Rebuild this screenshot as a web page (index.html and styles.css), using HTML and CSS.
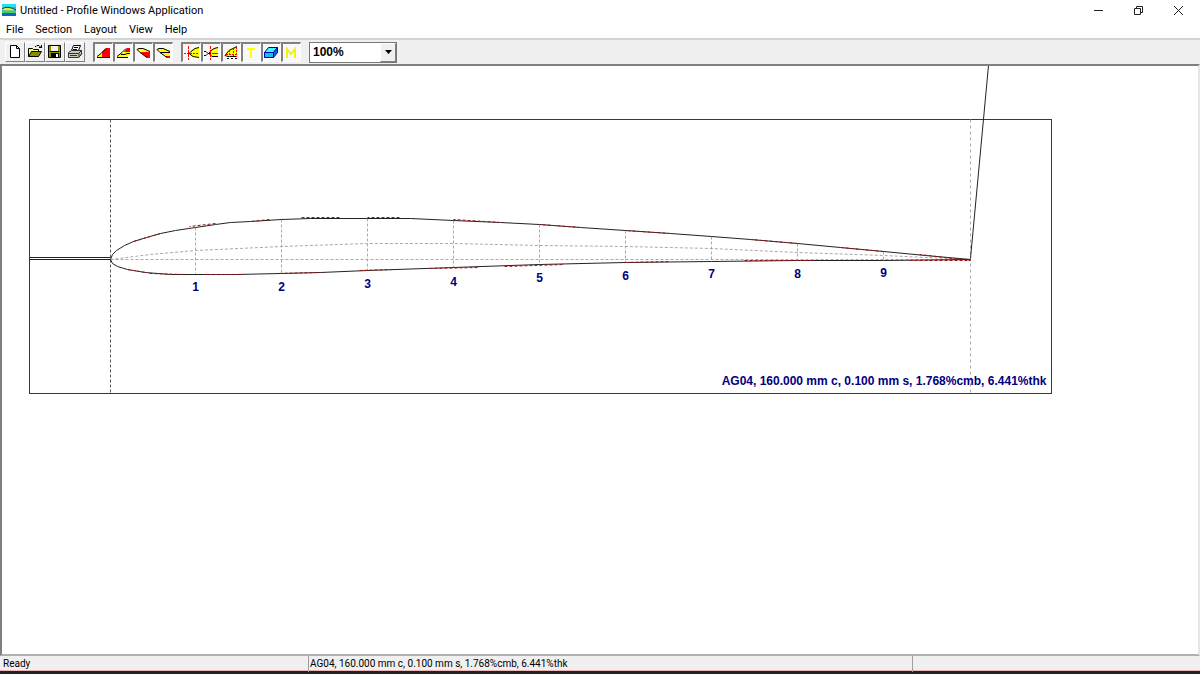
FILE: index.html
```html
<!DOCTYPE html>
<html lang="en">
<head>
  <meta charset="UTF-8">
  <title>Untitled - Profile Windows Application</title>
  <link rel="stylesheet" href="styles.css">
</head>
<body>
<header class="titlebar">
  <svg class="app-icon" width="16" height="14" viewBox="0 0 16 14" aria-hidden="true">
    <rect x="1" y="1" width="14" height="12" fill="#19b5ee"/>
    <path d="M1 1h14v3H9L1 5z" fill="#27e0f5"/>
    <path d="M1 6Q6 2 14 6L15 7Q8 8 1 7z" fill="#e8ea28"/>
    <path d="M1 6Q6 2 15 7" fill="none" stroke="#123c46"/>
    <path d="M1 8Q8 9 15 8v2H1z" fill="#43d65a"/>
    <path d="M1 10h14v3H1z" fill="#1264c0"/>
  </svg>
  <span class="title">Untitled - Profile Windows Application</span>
  <div class="window-buttons">
    <button type="button" aria-label="Minimize"><svg width="11" height="11" viewBox="0 0 11 11"><path d="M1 5.500h9"/></svg></button>
    <button type="button" aria-label="Restore"><svg width="11" height="11" viewBox="0 0 11 11"><path d="M1.500 3.500h6v6h-6zM3.500 3V1.500h6v6H8"/></svg></button>
    <button type="button" aria-label="Close"><svg width="11" height="11" viewBox="0 0 11 11"><path d="M1 1l9 9M10 1l-9 9"/></svg></button>
  </div>
</header>
<nav class="menu">
  <button type="button">File</button>
  <button type="button">Section</button>
  <button type="button">Layout</button>
  <button type="button">View</button>
  <button type="button">Help</button>
</nav>
<div class="toolbar">
  <div class="tools">
    <button type="button" aria-label="New"><svg width="16" height="16" viewBox="0 0 16 16">
      <path d="M3.500 1.500h6l3 3v9h-9z" fill="#fff" stroke="#000"/><path d="M9.500 1.500v3h3" fill="none" stroke="#000"/>
    </svg></button>
    <button type="button" aria-label="Open"><svg width="16" height="16" viewBox="0 0 16 16">
      <path d="M1.500 12.500v-8h4l1 1h5v2" fill="#ffff66" stroke="#000"/>
      <path d="M1.500 12.500l3-5h10l-3 5z" fill="#8c8c00" stroke="#000"/>
      <path d="M8 2.500h1l1-1h2l2 2M14.500 1v3M12 3.500h3" fill="none" stroke="#000"/>
    </svg></button>
    <button type="button" aria-label="Save"><svg width="16" height="16" viewBox="0 0 16 16">
      <path d="M1.500 1.500h12v12h-12z" fill="#8c8c00" stroke="#000"/>
      <path d="M4 2h7v5H4z" fill="#f0f0f0"/><path d="M4 9h8v5H4z"/><path d="M9 10h2v3H9z" fill="#fff"/><path d="M3 7h9v1H3z"/>
    </svg></button>
    <button type="button" aria-label="Print"><svg width="16" height="16" viewBox="0 0 16 16">
      <path d="M4.500 6.500l2-5h7l-2 5" fill="#fff" stroke="#000"/>
      <path d="M7 3.500h4M6 5.500h4" stroke="#000"/>
      <path d="M1.500 8.500l3-2h10v4l-3 3h-10z" fill="#c6c6c6" stroke="#333"/>
      <path d="M1 9.500h11v4M12 9l3-3M3 11.500h7M13 11.500l2-2" fill="none" stroke="#333"/>
      <path d="M8 10h2v1H8z" fill="#e6e600"/>
    </svg></button>
  </div>
  <div class="tools">
    <button type="button" class="checked" aria-pressed="true" aria-label="Upper root section"><svg width="16" height="16" viewBox="0 0 16 16">
      <path d="M2 12l5-4v4z" fill="#ff0"/><path d="M7 12V7l4-4h4v9z" fill="#f00"/>
      <path d="M2 12.500h13M2 11.500l4-3 5-5" fill="none" stroke="#000"/>
    </svg></button>
    <button type="button" class="checked" aria-pressed="true" aria-label="Upper tip section"><svg width="16" height="16" viewBox="0 0 16 16">
      <path d="M2 12l6-5h7v2l-3 3z" fill="#ff0"/><path d="M9 7l3-4h3v4z" fill="#f00"/>
      <path d="M2 12.500h11M2 11.500l5-4 4-4M6 9.500h4l2-1h3" fill="none" stroke="#000"/>
    </svg></button>
    <button type="button" class="checked" aria-pressed="true" aria-label="Lower root section"><svg width="16" height="16" viewBox="0 0 16 16">
      <path d="M2 5l2-2h4l7 3v2H5z" fill="#ff0"/><path d="M5 7h10v6h-3z" fill="#f00"/>
      <path d="M2 4.500l2-1h4l7 3M2 4.500l3 3 7 5" fill="none" stroke="#000"/>
    </svg></button>
    <button type="button" class="checked" aria-pressed="true" aria-label="Lower tip section"><svg width="16" height="16" viewBox="0 0 16 16">
      <path d="M2 5l2-2h4l7 3v5h-4z" fill="#ff0"/><path d="M10 11h5v2h-3z" fill="#f00"/>
      <path d="M2 4.500l2-1h4l7 3M2 4.500l3 3 7 5M5 7.500h10" fill="none" stroke="#000"/>
    </svg></button>
  </div>
  <div class="tools">
    <button type="button" class="checked" aria-pressed="true" aria-label="Axes"><svg width="16" height="16" viewBox="0 0 16 16">
      <path d="M6 8l4-4 6-2v10h-6z" fill="#ff0"/><path d="M16 2.500l-4 1-4 3-2 2 4 3 6 1" fill="none" stroke="#000"/>
      <path d="M5.500 1v14" stroke="#f00" stroke-dasharray="3 1"/><path d="M1 8.500h15" stroke="#f00" stroke-dasharray="2 1"/>
    </svg></button>
    <button type="button" class="checked" aria-pressed="true" aria-label="Leading edge"><svg width="16" height="16" viewBox="0 0 16 16">
      <path d="M6 8l3-4 6-2v10H8z" fill="#ff0"/><path d="M15 2.500l-4 1-4 3-1 2 3 3h6M1 6.500h2l2 2M1 10.500h2l2-2h3" fill="none" stroke="#000"/>
      <path d="M7.500 1v14" stroke="#f00" stroke-dasharray="3 1"/><path d="M9 8.500h6" stroke="#f00"/>
    </svg></button>
    <button type="button" class="checked" aria-pressed="true" aria-label="Stations"><svg width="16" height="16" viewBox="0 0 16 16">
      <path d="M2 9l5-5 7-3v10H4z" fill="#ff0"/><path d="M14 1.500l-4 2-4 2-4 5 3 1h9" fill="none" stroke="#000"/>
      <path d="M6.500 5v7M10.500 3v9M13.500 2v10M3 9.500h12" stroke="#f00" stroke-dasharray="2 1"/>
      <path d="M4 13.500h2M8 13.500h2M12 13.500h2" stroke="#000"/>
    </svg></button>
    <button type="button" class="checked" aria-pressed="true" aria-label="Text"><svg width="16" height="16" viewBox="0 0 16 16">
      <path d="M4 4h8M8 4v9" fill="none" stroke="#ff0" stroke-width="2"/>
    </svg></button>
    <button type="button" class="checked" aria-pressed="true" aria-label="Block"><svg width="16" height="16" viewBox="0 0 16 16">
      <path d="M1.500 7.500l4-5h9l-4 5z" fill="#3ff" stroke="#00a"/><path d="M1.500 7.500h9v5h-9z" fill="#19bdf5" stroke="#00a"/>
      <path d="M10.500 7.500l4-5v5l-4 5z" fill="#16c" stroke="#00a"/>
    </svg></button>
    <button type="button" class="checked" aria-pressed="true" aria-label="Mirror"><svg width="16" height="16" viewBox="0 0 16 16">
      <path d="M4 13V4l4 5 4-5v9" fill="none" stroke="#f4ef16" stroke-width="2"/>
    </svg></button>
  </div>
  <div class="zoom">
    <select aria-label="Zoom">
      <option>50%</option>
      <option selected>100%</option>
      <option>200%</option>
    </select>
    <span class="arrow"><svg width="7" height="4" viewBox="0 0 7 4"><path d="M0 0h7L3.500 4z"/></svg></span>
  </div>
</div>
<main class="sheet">
  <svg class="drawing" role="img" aria-label="AG04 airfoil section">
    <g transform="translate(27.500 53.500)">
      <rect class="frame" width="1022" height="274"/>
      <path class="axis start" d="M81 0v273"/>
      <path class="axis" d="M941 0v273"/>
      <path class="guide" d="M81 140H941M166 108V154M252 100V154M338 99V151M424 101V148M510 105V146M596 111V143M682 117V142M768 124V141M854 132V140"/>
      <path class="guide" d="M81 140L121 135L166 131L252 127L338 124L424 124L510 126L596 127L682 129L768 133L854 136L941 140"/>
      <path class="wire" d="M0 138H81M0 140H81M941 139L959 -54"/>
      <path class="foil" d="M941 140L896 136L854 132L811 128L768 124L721 120L682 117L641 114L596 111L551 108L510 105L471 103L424 101L381 99L338 99L281 99L252 100L221 102L201 103L186 105L166 108L146 111L131 114L117 118L104 122L95 126L87 131L83 135L81 140L83 144L88 147L98 150L116 153L141 155L206 155L252 154L291 153L338 151L424 148L510 145L596 143L682 142L768 141L854 141Z"/>
      <path class="trace" d="M854 132L811 128M768 124L721 120M641 114L596 111M551 108L510 105M471 103L424 100M370 98H338M310 98H272M240 100L221 102M186 104L160 107M131 114L104 122M98 150L116 153M120 154L155 155M175 155H215M245 154L291 153M330 151L365 150M400 149L450 148M475 147L535 145M596 143L640 142M715 141H785M880 141H941L890 135"/>
      <g class="label station">
        <text x="166" y="171">1</text>
        <text x="252" y="171">2</text>
        <text x="338" y="168">3</text>
        <text x="424" y="166">4</text>
        <text x="510" y="162">5</text>
        <text x="596" y="160">6</text>
        <text x="682" y="158">7</text>
        <text x="768" y="158">8</text>
        <text x="854" y="157">9</text>
      </g>
      <text class="label caption" x="1017" y="265">AG04, 160.000 mm c, 0.100 mm s, 1.768%cmb, 6.441%thk</text>
    </g>
  </svg>
</main>
<footer class="status">
  <span>Ready</span>
  <span class="pane">AG04, 160.000 mm c, 0.100 mm s, 1.768%cmb, 6.441%thk</span>
  <span class="pane"></span>
</footer>
</body>
</html>
```

FILE: styles.css
```css
* {
  box-sizing: border-box;
}

body {
  margin: 0;
  height: 100vh;
  display: flex;
  flex-direction: column;
  overflow: hidden;
  background: #fff;
  color: #000;
  font-family: Roboto, "Open Sans", sans-serif;
  font-size: 11px;
}

button {
  margin: 0;
  padding: 0;
  border: 0;
  background: none;
  color: inherit;
  font: inherit;
}

svg {
  display: block;
}

.titlebar {
  display: flex;
  align-items: center;
  height: 20px;
  padding: 0 2px 0 1px;
}

.app-icon {
  margin-right: 3px;
}

.title {
  flex: 1;
}

.window-buttons {
  display: flex;
}

.window-buttons button {
  display: flex;
  justify-content: center;
  align-items: center;
  width: 40px;
  height: 18px;
}

.window-buttons svg {
  fill: none;
  stroke: #222;
}

.menu {
  display: flex;
  height: 18px;
}

.menu button {
  padding: 0 6px;
}

.toolbar {
  display: flex;
  align-items: center;
  gap: 8px;
  height: 26px;
  padding: 0 5px;
  border-top: 2px solid #d4d4d4;
  background: #f0f0f0;
}

.tools {
  display: flex;
}

.tools button {
  width: 20px;
  height: 20px;
  padding: 1px;
  border: 1px solid;
  border-color: #fff #808080 #808080 #fff;
}

.tools .checked {
  padding: 0;
  border-width: 2px 1px 1px 2px;
  border-color: #808080 #fff #fff #808080;
  background: #f8f8f8;
}

.zoom {
  display: flex;
  width: 88px;
  height: 21px;
  border: 1px solid #777;
  background: #fff;
}

.zoom select {
  flex: 1;
  min-width: 0;
  padding: 0 3px;
  border: 0;
  background: #fff;
  appearance: none;
  font: bold 12px "Liberation Sans", Arial, sans-serif;
}

.arrow {
  display: flex;
  justify-content: center;
  align-items: center;
  width: 16px;
  border: 1px solid;
  border-color: #fff #808080 #808080 #fff;
  background: #f0f0f0;
}

.sheet {
  flex: 1;
  min-height: 0;
  border: 2px solid #808080;
  border-right-color: #e6e6e6;
  border-bottom-color: #b0b0b0;
}

.drawing {
  width: 100%;
  height: 100%;
  fill: none;
}

.frame {
  stroke: #2222ee;
}

.axis {
  stroke: #aaa;
  stroke-dasharray: 3 3;
}

.start {
  stroke: #555;
  stroke-dasharray: 3 2;
}

.guide {
  stroke: #aaa;
  stroke-dasharray: 3 2;
}

.wire,
.foil {
  stroke: #222;
}

.trace {
  stroke: #a01010;
  stroke-dasharray: 3 2;
}

.label {
  fill: #000080;
  font: bold 12px "Liberation Sans", Arial, sans-serif;
}

.station {
  text-anchor: middle;
}

.caption {
  text-anchor: end;
}

.status {
  display: grid;
  grid-template-columns: 308px 21fr 10fr;
  height: 18px;
  border-bottom: 3px solid #222;
  background: #f0f0f0;
  box-shadow: inset 0 -1px #efb4b4;
  font-size: 10px;
  line-height: 16px;
}

.status span {
  padding-left: 3px;
}

.status .pane {
  padding-left: 1px;
  border-left: 1px solid #a0a0a0;
}
```
